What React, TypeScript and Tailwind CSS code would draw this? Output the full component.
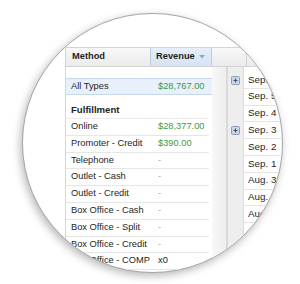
const rows: { label: string; value: string; kind: "money" | "dash" | "plain" }[] = [
  { label: "Online", value: "$28,377.00", kind: "money" },
  { label: "Promoter - Credit", value: "$390.00", kind: "money" },
  { label: "Telephone", value: "-", kind: "dash" },
  { label: "Outlet - Cash", value: "-", kind: "dash" },
  { label: "Outlet - Credit", value: "-", kind: "dash" },
  { label: "Box Office - Cash", value: "-", kind: "dash" },
  { label: "Box Office - Split", value: "-", kind: "dash" },
  { label: "Box Office - Credit", value: "-", kind: "dash" },
  { label: "Box Office - COMP", value: "x0", kind: "plain" },
];

const dates = [
  { text: "Sep. 6", plus: true },
  { text: "Sep. 5", plus: false },
  { text: "Sep. 4", plus: false },
  { text: "Sep. 3", plus: true },
  { text: "Sep. 2", plus: false },
  { text: "Sep. 1", plus: false },
  { text: "Aug. 31", plus: false },
  { text: "Aug. 30", plus: false },
  { text: "Aug. 29", plus: false },
  { text: "Aug. 28", plus: false },
];

const PlusBox = () => (
  <svg width="9" height="9" viewBox="0 0 9 9">
    <rect x="0.5" y="0.5" width="8" height="8" rx="1" fill="#cdd8e6" stroke="#8d9db5" />
    <path d="M2.5 4.5h4M4.5 2.5v4" stroke="#3f5275" strokeWidth="1.2" />
  </svg>
);

const valueColor = (kind: string) =>
  kind === "money" ? "text-[#3f9a3f]" : kind === "dash" ? "text-[#9fb39f]" : "text-[#222]";

export default function App() {
  return (
    <div className="w-[300px] h-[284px] bg-white overflow-hidden font-['Liberation_Sans',Arial,sans-serif] text-[9.3px] text-[#1e1e1e]">
      <div className="ml-[22px] mt-[13px] w-[261px] h-[260px] rounded-full overflow-hidden border border-[#a5a5a5] bg-white shadow-[-2px_3px_8px_rgba(0,0,0,0.28)]">
        <div className="flex pl-[42px] pt-[33px] h-full">
          {/* Method / Revenue table */}
          <div className="w-[147px] shrink-0 flex flex-col">
            <div className="flex h-[20px] border-y border-[#d4d4d4] bg-gradient-to-b from-[#f8f8f8] to-[#ebebeb]">
              <div className="w-[85px] flex items-center pl-[6px] font-bold border-l border-[#d4d4d4]">Method</div>
              <div className="flex-1 flex items-center pl-[5px] gap-[4px] font-bold bg-gradient-to-b from-[#e6eefa] to-[#d6e3f3] border-x border-[#bccde4]">
                Revenue
                <svg width="6" height="4" viewBox="0 0 6 4">
                  <path d="M0 0h6L3 3.5z" fill="#8ea4c4" />
                </svg>
              </div>
            </div>
            <div className="flex-1 border-l border-[#d6d6d6]">
              <div className="h-[11px]" />
              <div className="flex h-[17px] items-center bg-[#e7f0fb] border border-l-0 border-[#c7d7ec] w-[147px]">
                <div className="w-[85px] pl-[5px]">All Types</div>
                <div className="pl-[7px] text-[#3f9a3f]">$28,767.00</div>
              </div>
              <div className="h-[7px]" />
              <div className="h-[17px] flex items-center pl-[5px] font-bold text-[9.6px] border-b border-[#ececec] w-[143px]">
                Fulfillment
              </div>
              {rows.map((r) => (
                <div key={r.label} className="flex h-[16.8px] items-center border-b border-[#e6e6e6] w-[143px] whitespace-nowrap">
                  <div className="w-[85px] pl-[5px]">{r.label}</div>
                  <div className={`pl-[7px] ${valueColor(r.kind)}`}>{r.value}</div>
                </div>
              ))}
            </div>
          </div>

          {/* gap column */}
          <div className="w-[16px] shrink-0 flex flex-col">
            <div className="h-[20px] border-y border-[#d4d4d4] bg-gradient-to-b from-[#f8f8f8] to-[#ebebeb]" />
            <div className="flex-1 bg-gradient-to-r from-[#f8f8f8] to-[#eeeeee] border-r-2 border-[#d9d9d9]" />
          </div>

          {/* date panel */}
          <div className="flex-1 flex flex-col">
            <div className="flex h-[20px] border-y border-[#d4d4d4] bg-gradient-to-b from-[#f8f8f8] to-[#ebebeb]">
              <div className="w-[19px] border-r border-[#d0d0d0]" />
              <div className="flex-1" />
            </div>
            <div className="flex-1 flex">
              <div className="w-[16px] bg-[#eeeeee] border-r border-[#dadada] flex flex-col pt-[5px]">
                {dates.map((d) => (
                  <div key={d.text} className="h-[16.8px] flex items-center justify-center">
                    {d.plus && <PlusBox />}
                  </div>
                ))}
              </div>
              <div className="flex-1 flex flex-col pt-[5px]">
                {dates.map((d) => (
                  <div key={d.text} className="h-[16.8px] flex items-center pl-[4px] border-b border-[#e4e4e4] whitespace-nowrap text-[9.8px]">
                    {d.text}
                  </div>
                ))}
              </div>
            </div>
          </div>
        </div>
      </div>
    </div>
  );
}
